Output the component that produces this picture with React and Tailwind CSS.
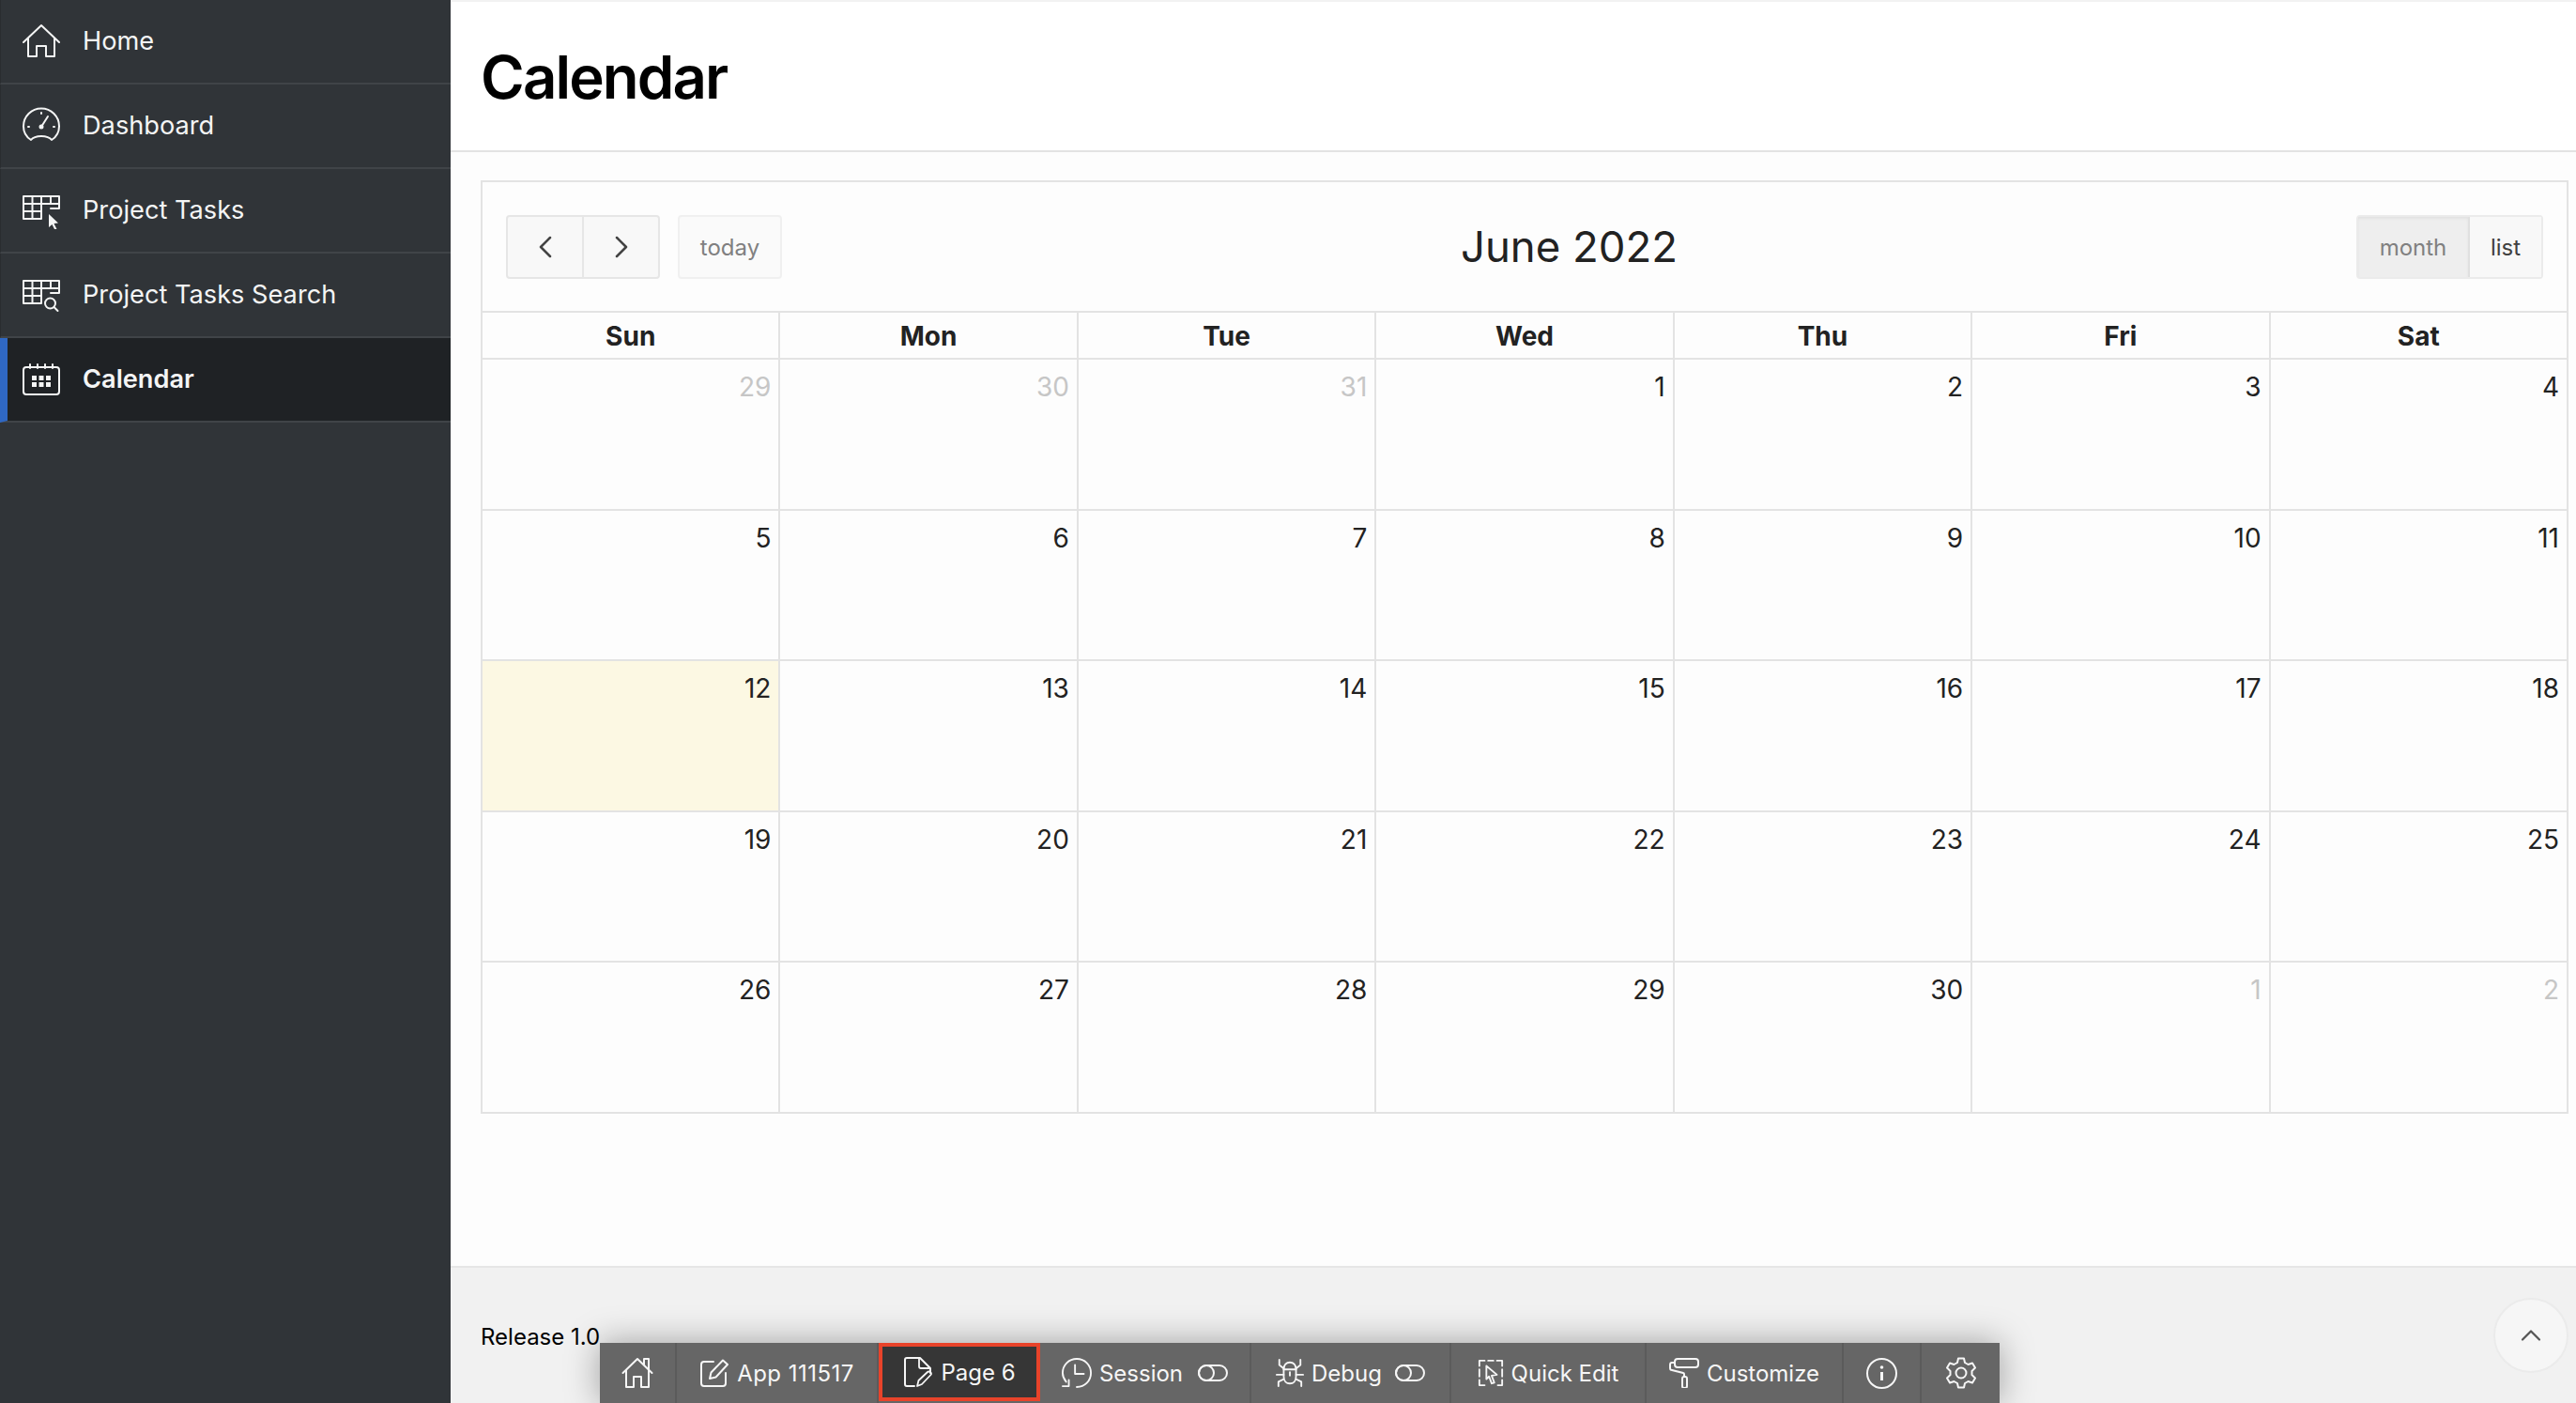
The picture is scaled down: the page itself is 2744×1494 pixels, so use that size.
import { ChevronLeft, ChevronRight, ChevronUp } from 'lucide-react';

const font = { fontFamily: 'Inter, "Liberation Sans", sans-serif' };

function Glyph({ size = 40, view = 40, className = '', children }) {
  return (
    <svg
      width={size}
      height={size}
      viewBox={`0 0 ${view} ${view}`}
      fill="none"
      stroke="currentColor"
      strokeWidth="2"
      strokeLinecap="round"
      strokeLinejoin="round"
      className={`shrink-0 ${className}`}
    >
      {children}
    </svg>
  );
}

const TableLines = () => (
  <>
    <path d="M20 5H39V18H30M1 5H20V29H1ZM1 13H39M1 21H20M10.500 5V29M20 5V18M30 5V13" />
  </>
);

const navItems = [
  {
    label: 'Home',
    icon: (
      <>
        <path d="M1 21L20 3L39 21" />
        <path d="M6 17V36H15V25H25V36H34V17" />
      </>
    ),
  },
  {
    label: 'Dashboard',
    icon: (
      <>
        <path d="M9 35C3.500 31.500 1 26 1 20.500C1 10 9.500 1.500 20 1.500C30.500 1.500 39 10 39 20.500C39 26 36.500 31.500 31 35C27 29.500 13 29.500 9 35Z" />
        <path d="M20 21L27 10" />
        <circle cx="20" cy="21" r="1.500" fill="currentColor" />
        <path d="M20 6V7M6 21H7M34 21H33" />
      </>
    ),
  },
  {
    label: 'Project Tasks',
    icon: (
      <>
        <TableLines />
        <path d="M28 24L38 33.500L33.500 34L36.500 40L34.500 41L31.500 35L28 38Z" fill="currentColor" stroke="none" />
      </>
    ),
  },
  {
    label: 'Project Tasks Search',
    icon: (
      <>
        <TableLines />
        <circle cx="29.500" cy="29" r="5.500" />
        <path d="M33.500 33L37.500 37" />
      </>
    ),
  },
  {
    label: 'Calendar',
    active: true,
    icon: (
      <>
        <rect x="1" y="7" width="38" height="29" rx="3" />
        <path d="M8 4V8M16 4V8M24 4V8M32 4V8" />
        <path
          d="M10 16H15V21H10ZM17.500 16H22.500V21H17.500ZM25 16H30V21H25ZM10 23H15V28H10ZM17.500 23H22.500V28H17.500ZM25 23H30V28H25Z"
          fill="currentColor"
          stroke="none"
        />
      </>
    ),
  },
];

// weeks of June 2022, muted days belong to the months around it
const weeks = [
  [[29, true], [30, true], [31, true], [1], [2], [3], [4]],
  [[5], [6], [7], [8], [9], [10], [11]],
  [[12], [13], [14], [15], [16], [17], [18]],
  [[19], [20], [21], [22], [23], [24], [25]],
  [[26], [27], [28], [29], [30], [1, true], [2, true]],
];

const dayNames = ['Sun', 'Mon', 'Tue', 'Wed', 'Thu', 'Fri', 'Sat'];

function Sidebar() {
  return (
    <aside className="w-[480px] shrink-0 bg-[#303438] text-[#f4f5f5]">
      {navItems.map((item) => (
        <div
          key={item.label}
          className={`flex items-center h-[90px] border-b-2 border-b-[#404448] text-[27.2px] ${
            item.active
              ? 'bg-[#1f2225] font-semibold border-l-8 border-l-[#2f68c4] pl-[16px]'
              : 'border-l border-l-[#2a2d30] pl-[23px]'
          }`}
        >
          <Glyph>{item.icon}</Glyph>
          <span className="ml-[24px] pt-[1px]">{item.label}</span>
        </div>
      ))}
    </aside>
  );
}

function CalendarGrid() {
  return (
    <div className="border-t-2 border-l-2 border-[#e3e3e3] bg-[#fdfdfd]">
      <div className="flex justify-between items-center h-[139px] pl-[25px] pr-[25px] border-r-2 border-b-2 border-[#e3e3e3]">
        <div className="flex items-center gap-[19px] w-[294px]">
          <div className="flex h-[68px] w-[164px] rounded-[4px] border-2 border-[#e6e6e6] bg-[#f8f8f8] text-[#444]">
            <button className="flex flex-1 items-center justify-center border-r-2 border-[#e6e6e6]">
              <ChevronLeft size={40} strokeWidth={1.5} />
            </button>
            <button className="flex flex-1 items-center justify-center">
              <ChevronRight size={40} strokeWidth={1.5} />
            </button>
          </div>
          <button className="h-[68px] w-[111px] pt-[2px] rounded-[4px] border-2 border-[#f0f0f0] bg-[#fafafa] text-[24px] text-[#808080]">
            today
          </button>
        </div>
        <h2 className="pt-[2px] text-[45.5px] text-[#222]">June 2022</h2>
        <div className="flex h-[68px] w-[199px] rounded-[4px] border-2 border-[#ebebeb] text-[24px]">
          <button className="w-[119px] pt-[2px] border-r-2 border-[#e0e0e0] bg-[#eeeeee] text-[#808080] shadow-[inset_0_2px_3px_rgba(0,0,0,0.05)]">
            month
          </button>
          <button className="flex-1 pt-[2px] bg-[#f8f8f8] text-[#404040]">list</button>
        </div>
      </div>
      <div className="grid grid-cols-7 h-[50px]">
        {dayNames.map((d) => (
          <div
            key={d}
            className="flex items-center justify-center pt-[2px] border-r-2 border-b-2 border-[#e3e3e3] text-[28px] font-bold text-[#222]"
          >
            {d}
          </div>
        ))}
      </div>
      {weeks.map((week, i) => (
        <div key={i} className="grid grid-cols-7 h-[160.6px]">
          {week.map(([day, muted], j) => (
            <div
              key={j}
              className={`border-r-2 border-b-2 border-[#e3e3e3] pt-[12px] pr-[8px] text-right text-[28px] leading-[34px] ${
                muted ? 'text-[#c6c6c6]' : 'text-[#222]'
              } ${i === 2 && j === 0 ? 'bg-[#fcf8e3]' : ''}`}
            >
              {day}
            </div>
          ))}
        </div>
      ))}
    </div>
  );
}

function Toggle() {
  return (
    <svg width="32" height="18" viewBox="0 0 32 18" fill="none" stroke="currentColor" strokeWidth="2" className="shrink-0">
      <rect x="1" y="1" width="30" height="16" rx="8" />
      <circle cx="9" cy="9" r="8" />
    </svg>
  );
}

function DevButton({ width, children, className = '' }) {
  return (
    <div
      className={`flex items-center justify-center gap-[8px] h-full border-r-2 border-[#5b5b5b] ${className}`}
      style={{ width }}
    >
      {children}
    </div>
  );
}

const Label = ({ className = '', children }) => <span className={`pt-[2px] ${className}`}>{children}</span>;

function DevBar() {
  return (
    <div className="absolute left-[639px] bottom-0 flex items-center h-[64px] w-[1491px] bg-[#666666] text-[24px] text-[#f6f6f6] shadow-[0_0_36px_rgba(0,0,0,0.35)]">
      <DevButton width={82}>
        <Glyph size={34} view={34}>
          <path d="M1.500 17L17 2L32.500 17" />
          <path d="M5 14V32H13V21H21V32H29V14" />
          <path d="M24 8V2H29V13" />
        </Glyph>
      </DevButton>
      <DevButton width={215} className="border-r-0">
        <Glyph size={32} view={32}>
          <path d="M15 4H5C3 4 2 5 2 7V27C2 29 3 30 5 30H25C27 30 28 29 28 27V16" />
          <path d="M11 22L12.500 15.500L25 2.500L30 7L17.500 20.500Z" />
        </Glyph>
        <Label className="tracking-[0.02em]">App 111517</Label>
      </DevButton>
      <div className="flex items-center justify-center gap-[8px] h-[62px] w-[172px] -mt-[2px] border-[4px] border-[#e8432a] bg-[#363636]">
        <Glyph size={32} view={32}>
          <path d="M12 31H4C3 31 2 30 2 29V3C2 2 3 1 4 1H18L29 12V17" />
          <path d="M17 2V10C17 11 18 12 19 12H28" strokeWidth="1.800" />
          <path d="M15 31L16.500 25L26 16C28 14.500 31 17 29.500 19L20 29Z" strokeWidth="1.800" />
        </Glyph>
        <Label>Page 6</Label>
      </div>
      <DevButton width={225}>
        <Glyph size={32} view={34}>
          <path d="M5 27C2.500 24 1 21 1 17C1 8 8 1 17 1C26 1 33 8 33 17C33 26 26 33 17 33" />
          <path d="M15 8V18H25" />
          <path d="M1 32H8V25" />
        </Glyph>
        <Label>Session</Label>
        <span className="ml-[8px]">
          <Toggle />
        </span>
      </DevButton>
      <DevButton width={213}>
        <Glyph size={30} view={32}>
          <path d="M9 12C9 7 12 4 16 4C20 4 23 7 23 12V20C23 25 20 28 16 28C12 28 9 25 9 20Z" />
          <path d="M9 12H23M16 15V19" />
          <path d="M4 1V7L9 11M28 1V7L23 11M1 18H9M31 18H23M3 31V26L9 23M29 31V26L23 23" />
        </Glyph>
        <Label>Debug</Label>
        <span className="ml-[6px]">
          <Toggle />
        </span>
      </DevButton>
      <DevButton width={208}>
        <Glyph size={28} view={30}>
          <path d="M8 1H2V7M12 1H18M22 1H28V7M28 11V19M28 23V29H23M8 29H2V23M2 11V19" />
          <path d="M10 7L22 17L16 18L19 26L16 27L13 19L10 22Z" />
        </Glyph>
        <Label>Quick Edit</Label>
      </DevButton>
      <DevButton width={210}>
        <Glyph size={32} view={32}>
          <rect x="6" y="1" width="25" height="9" rx="3" />
          <path d="M6 5H3C2 5 1 6 1 7V11C1 12 2 13 3 13L15 16C16 16 16 17 16 18V20" />
          <rect x="14" y="20" width="5" height="12" rx="2" />
        </Glyph>
        <Label>Customize</Label>
      </DevButton>
      <DevButton width={83}>
        <Glyph size={33} view={33}>
          <circle cx="16.500" cy="16.500" r="15.500" />
          <path d="M16.500 15V24" strokeWidth="3" strokeLinecap="butt" />
          <circle cx="16.500" cy="10" r="1.800" fill="currentColor" stroke="none" />
        </Glyph>
      </DevButton>
      <div className="flex flex-1 items-center justify-center h-full">
        <Glyph size={34} view={34}>
          <circle cx="17" cy="17" r="5.500" />
          <path d="M14 1.500H20L21 6L24.500 8L29 6.500L32 11.500L28.500 15V19L32 22.500L29 27.500L24.500 26L21 28L20 32.500H14L13 28L9.500 26L5 27.500L2 22.500L5.500 19V15L2 11.500L5 6.500L9.500 8L13 6Z" />
        </Glyph>
      </div>
    </div>
  );
}

export default function App() {
  return (
    <div className="relative flex h-screen overflow-hidden bg-white" style={font}>
      <Sidebar />
      <main className="flex flex-1 flex-col min-w-0">
        <header className="flex items-center h-[162px] pt-[2px] pl-[32px] border-t-2 border-b-2 border-t-[#f2f2f2] border-b-[#e3e3e3] bg-white">
          <h1 className="text-[63.5px] font-semibold text-black tracking-[-0.03em]">Calendar</h1>
        </header>
        <div className="flex-1 pt-[30px] pl-[32px] pr-[8px] bg-[#fdfdfd]">
          <CalendarGrid />
        </div>
        <footer className="flex justify-between h-[146px] pt-[32px] pl-[32px] pr-[8px] border-t-2 border-[#e6e6e6] bg-[#f1f1f1]">
          <span className="mt-[24px] text-[24px] leading-[36px] text-black">Release 1.0</span>
          <button className="flex items-center justify-center h-[80px] w-[80px] rounded-full border-2 border-[#ebebeb] bg-[#f6f6f6] text-[#555]">
            <ChevronUp size={36} strokeWidth={1.5} />
          </button>
        </footer>
      </main>
      <DevBar />
    </div>
  );
}
